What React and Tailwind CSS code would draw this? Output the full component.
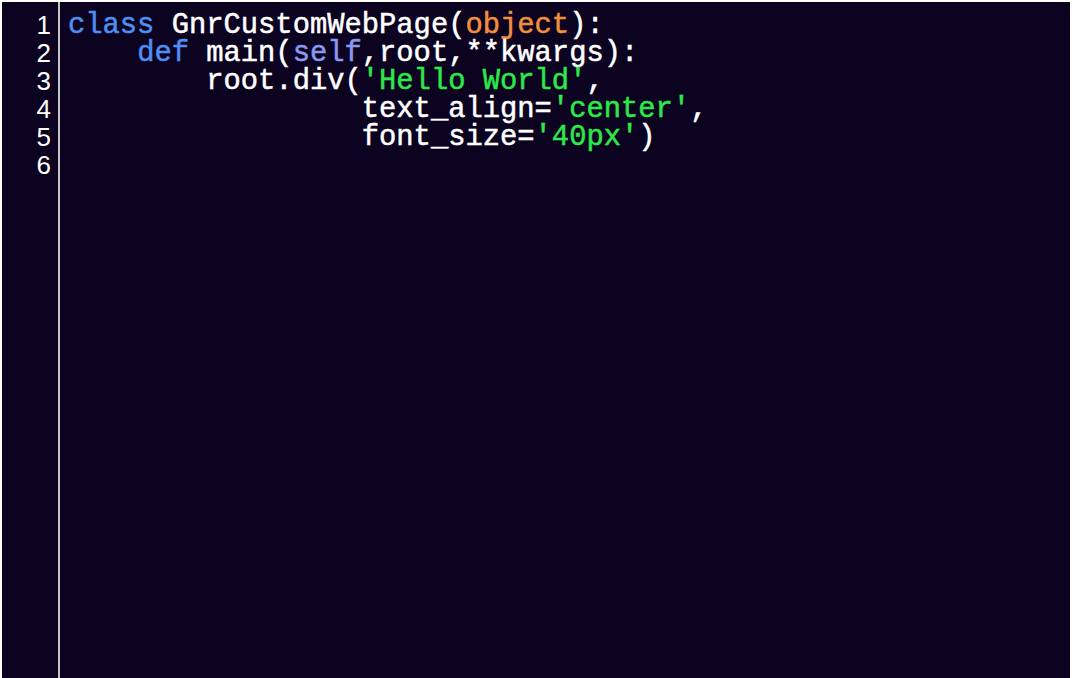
const lines = [
  [
    ["class", "text-[#4f8ff2]"],
    [" GnrCustomWebPage(", "text-white"],
    ["object", "text-[#f0903f]"],
    ["):", "text-white"],
  ],
  [
    ["    ", ""],
    ["def", "text-[#4f8ff2]"],
    [" main(", "text-white"],
    ["self", "text-[#8b98ee]"],
    [",root,**kwargs):", "text-white"],
  ],
  [
    ["        root.div(", "text-white"],
    ["'Hello World'", "text-[#2ee84a]"],
    [",", "text-white"],
  ],
  [
    ["                 text_align=", "text-white"],
    ["'center'", "text-[#2ee84a]"],
    [",", "text-white"],
  ],
  [
    ["                 font_size=", "text-white"],
    ["'40px'", "text-[#2ee84a]"],
    [")", "text-white"],
  ],
  [],
];

export default function App() {
  return (
    <div className="h-[678px] w-[1072px] overflow-hidden bg-white pl-[2px] pr-[2px] pt-[2px]">
      <div className="flex h-full bg-[#0b0320]">
        <div className="w-[58px] shrink-0 border-r-2 border-[#c4c4c4] pt-[9px] pr-[7px] text-right font-['Liberation_Sans',sans-serif] text-[26px] leading-[28px] text-white">
          {lines.map((_, i) => (
            <div key={i} className="h-[28px]">{i + 1}</div>
          ))}
        </div>
        <pre className="flex-1 pl-[8px] pt-[10px] font-['Liberation_Mono',monospace] text-[28.8px] leading-[28px] [-webkit-text-stroke:0.5px_currentColor]">
          {lines.map((parts, i) => (
            <div key={i} className="h-[28px] whitespace-pre">
              {parts.map(([t, c], j) => (
                <span key={j} className={c}>{t}</span>
              ))}
            </div>
          ))}
        </pre>
      </div>
    </div>
  );
}
